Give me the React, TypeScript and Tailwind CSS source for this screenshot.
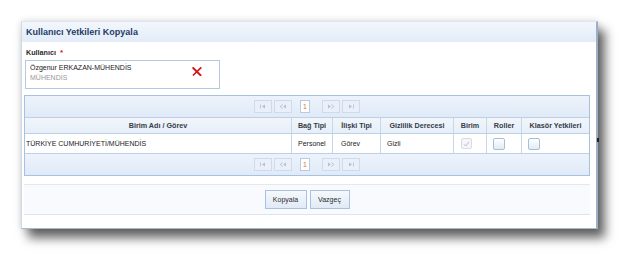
import React from "react";

const font = { fontFamily: '"Liberation Sans", Arial, sans-serif' };

function PagerIcon({ kind }: { kind: "first" | "prev" | "next" | "last" }) {
  const c = "#b4c0d0";
  return (
    <svg width="8" height="5" viewBox="0 0 8 5">
      {kind === "first" && (
        <>
          <rect x="1" y="0.5" width="0.8" height="4" fill={c} />
          <path d="M6 0.5 L3 2.5 L6 4.5 Z" fill={c} />
        </>
      )}
      {kind === "prev" && (
        <>
          <path d="M3.8 0.5 L1 2.5 L3.8 4.5" fill="none" stroke={c} strokeWidth="0.8" />
          <path d="M7 0.5 L4.2 2.5 L7 4.5 Z" fill={c} />
        </>
      )}
      {kind === "next" && (
        <>
          <path d="M1 0.5 L3.8 2.5 L1 4.5 Z" fill={c} />
          <path d="M4.2 0.5 L7 2.5 L4.2 4.5" fill="none" stroke={c} strokeWidth="0.8" />
        </>
      )}
      {kind === "last" && (
        <>
          <path d="M2 0.5 L5 2.5 L2 4.5 Z" fill={c} />
          <rect x="6.2" y="0.5" width="0.8" height="4" fill={c} />
        </>
      )}
    </svg>
  );
}

function PagerBtn({ kind }: { kind: "first" | "prev" | "next" | "last" }) {
  return (
    <div className="w-[18px] h-[13px] border border-[#cfdbeb] bg-[#e9f0f9] flex items-center justify-center">
      <PagerIcon kind={kind} />
    </div>
  );
}

function Pager() {
  return (
    <div className="h-[21px] bg-gradient-to-b from-[#edf3fb] to-[#e0eaf7] flex items-center justify-center">
      <div className="flex items-center">
        <PagerBtn kind="first" />
        <div className="w-[2px]" />
        <PagerBtn kind="prev" />
        <div className="w-[8px]" />
        <div className="w-[10px] h-[13px] bg-white border border-[#b9cbe3] flex items-center justify-center text-[7px] leading-none text-[#e8721c]">
          1
        </div>
        <div className="w-[12px]" />
        <PagerBtn kind="next" />
        <div className="w-[2px]" />
        <PagerBtn kind="last" />
      </div>
    </div>
  );
}

function Checkbox({ checked, disabled }: { checked?: boolean; disabled?: boolean }) {
  if (disabled) {
    return (
      <div className="w-[11px] h-[11px] rounded-[2px] border border-[#d6dde6] bg-[#f3f5f8] flex items-center justify-center">
        {checked && (
          <svg width="7" height="6" viewBox="0 0 7 6">
            <path d="M1 3.2 L2.8 5 L6 1" fill="none" stroke="#b9c1cc" strokeWidth="1" />
          </svg>
        )}
      </div>
    );
  }
  return (
    <div className="w-[12px] h-[12px] rounded-[2px] border border-[#a9bdd7] bg-gradient-to-b from-[#ffffff] to-[#e3ebf5]" />
  );
}

const headers = ["Birim Adı / Görev", "Bağ Tipi", "İlişki Tipi", "Gizlilik Derecesi", "Birim", "Roller", "Klasör Yetkileri"];

export default function App() {
  return (
    <div className="w-[641px] h-[272px] bg-white pt-[21px] pl-[21px]" style={font}>
      <div className="relative w-[577px] h-[208px] bg-white border-t border-t-[#dfe6ef] border-l border-l-[#cfdae8] border-b border-b-[#aab8cc] border-r-2 border-r-[#9daec6] shadow-[7px_9px_10px_rgba(0,0,0,0.6),0_0_7px_rgba(0,0,0,0.15)] flex flex-col">
        <div className="h-[20px] bg-gradient-to-b from-[#f3f7fc] to-[#e2ecf8] flex items-center pl-[4px]">
          <span className="text-[9px] font-bold text-[#1f3c66] leading-none">Kullanıcı Yetkileri Kopyala</span>
        </div>
        <div className="pl-[2px] pr-[6px] flex flex-col">
          <div className="mt-[7px] pl-[2px] h-[8px] flex items-center text-[7.2px] leading-none font-bold text-[#2b2b2b]">
            Kullanıcı <span className="text-[#e02020] ml-[4px] text-[8px]">*</span>
          </div>
          <div className="mt-[3px] ml-[1px] w-[195px] h-[29px] border border-[#b3c8e2] bg-white flex items-start pl-[4px] pt-[2px]">
            <div className="flex flex-col w-[162px]">
              <span className="text-[7px] leading-[10px] text-[#222]">Özgenur ERKAZAN-MÜHENDİS</span>
              <span className="text-[7px] leading-[10px] text-[#9a9a9a]">MÜHENDİS</span>
            </div>
            <svg className="mt-[4px]" width="10" height="9" viewBox="0 0 10 9">
              <path d="M1.2 1 L8.6 8.2" stroke="#d01818" strokeWidth="1.9" strokeLinecap="round" />
              <path d="M8.8 0.8 L1.4 8" stroke="#d01818" strokeWidth="1.7" strokeLinecap="round" />
            </svg>
          </div>

          <div className="mt-[6px] w-[566px] border border-[#a9c1e0] flex flex-col">
            <Pager />
            <div className="grid grid-cols-[266px_41px_48px_73px_33px_35px_68px] border-t border-[#bcd0e8] bg-gradient-to-b from-[#f2f6fb] to-[#e6eef8]">
              {headers.map((h, i) => (
                <div
                  key={h}
                  className={`h-[15px] flex items-center justify-center text-[7.2px] leading-none font-bold text-[#333c48] whitespace-nowrap ${i > 0 ? "border-l border-[#c8d7ea]" : ""}`}
                >
                  {h}
                </div>
              ))}
            </div>
            <div className="grid grid-cols-[266px_41px_48px_73px_33px_35px_68px] border-t border-[#bcd0e8] bg-white">
              <div className="h-[19px] flex items-center pl-[1px] text-[7px] leading-none text-[#222] whitespace-nowrap">TÜRKİYE CUMHURİYETİ/MÜHENDİS</div>
              <div className="h-[19px] flex items-center pl-[6px] text-[7px] leading-none text-[#222] border-l border-[#c8d7ea]">Personel</div>
              <div className="h-[19px] flex items-center pl-[8px] text-[7px] leading-none text-[#222] border-l border-[#c8d7ea]">Görev</div>
              <div className="h-[19px] flex items-center pl-[6px] text-[7px] leading-none text-[#222] border-l border-[#c8d7ea]">Gizli</div>
              <div className="h-[19px] flex items-center pl-[7px] border-l border-[#c8d7ea]"><Checkbox checked disabled /></div>
              <div className="h-[19px] flex items-center pl-[6px] border-l border-[#c8d7ea]"><Checkbox /></div>
              <div className="h-[19px] flex items-center pl-[6px] border-l border-[#c8d7ea]"><Checkbox /></div>
            </div>
            <div className="border-t border-[#bcd0e8]">
              <Pager />
            </div>
          </div>

          <div className="mt-[8px] w-[566px] h-[31px] border-t border-t-[#e3e8ef] border-b border-b-[#dbe5f1] bg-[#f8fafd] flex items-center justify-center gap-[3px]">
            <div className="w-[42px] h-[19px] border border-[#a9c2e2] bg-gradient-to-b from-[#f6f9fd] to-[#e0eaf6] flex items-center justify-center text-[7px] leading-none text-[#2b2b2b]">Kopyala</div>
            <div className="w-[40px] h-[19px] border border-[#a9c2e2] bg-gradient-to-b from-[#f6f9fd] to-[#e0eaf6] flex items-center justify-center text-[7px] leading-none text-[#2b2b2b]">Vazgeç</div>
          </div>
        </div>
        <div className="absolute right-[-3px] top-[116px] w-[2px] h-[4px] bg-[#222]" />
      </div>
    </div>
  );
}
